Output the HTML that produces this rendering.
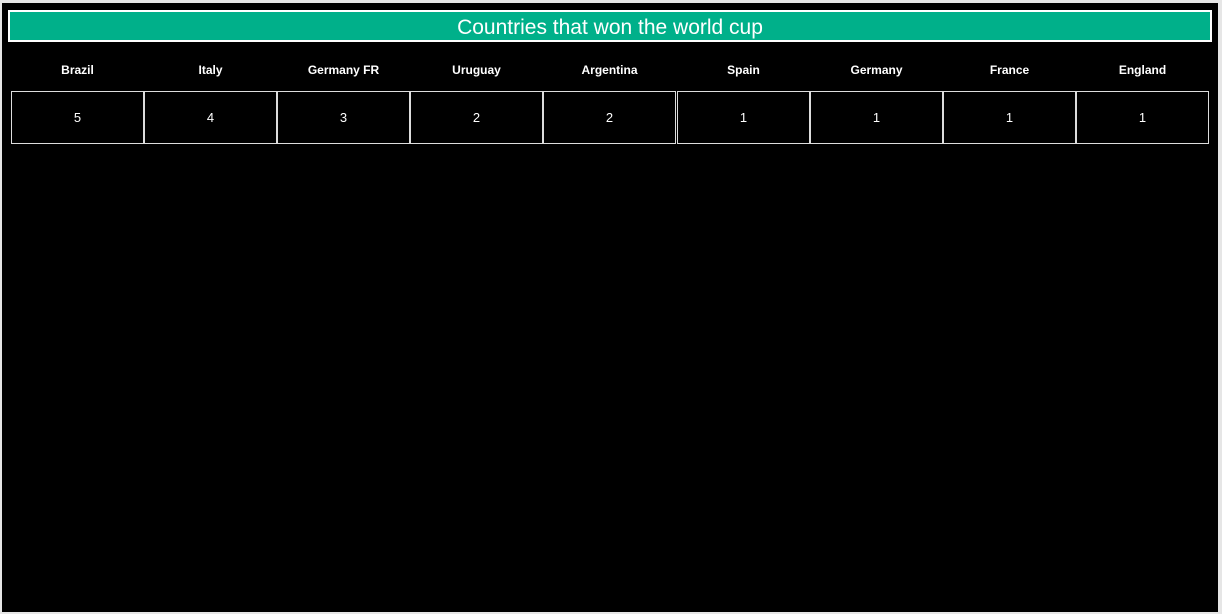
<!DOCTYPE html>
<html><head><style>
body{margin:0;width:1222px;height:614px;background:#e6e6e6;overflow:hidden;font-family:"Liberation Sans","DejaVu Sans",sans-serif;}
#bg{position:absolute;left:2px;top:3px;width:1216px;height:609px;background:#000;}
#title{position:absolute;left:8px;top:10px;width:1200px;height:28px;border:2px solid #fff;background:#00b08a;color:#fff;font-size:21px;text-align:center;line-height:32px;}
.h{position:absolute;top:61px;width:133px;text-align:center;color:#fff;font-weight:bold;font-size:12px;line-height:18px;}
.c{position:absolute;top:91px;width:131px;height:51px;border:1px solid #ddd;color:#fff;font-size:13px;text-align:center;line-height:51px;box-sizing:content-box;}
</style></head><body>
<div id="bg"></div>
<div id="title">Countries that won the world cup</div>
<div class="h" style="left:11px">Brazil</div>
<div class="h" style="left:144px">Italy</div>
<div class="h" style="left:277px">Germany FR</div>
<div class="h" style="left:410px">Uruguay</div>
<div class="h" style="left:543px">Argentina</div>
<div class="h" style="left:677px">Spain</div>
<div class="h" style="left:810px">Germany</div>
<div class="h" style="left:943px">France</div>
<div class="h" style="left:1076px">England</div>
<div class="c" style="left:11px">5</div>
<div class="c" style="left:144px">4</div>
<div class="c" style="left:277px">3</div>
<div class="c" style="left:410px">2</div>
<div class="c" style="left:543px">2</div>
<div class="c" style="left:677px">1</div>
<div class="c" style="left:810px">1</div>
<div class="c" style="left:943px">1</div>
<div class="c" style="left:1076px">1</div>
</body></html>
